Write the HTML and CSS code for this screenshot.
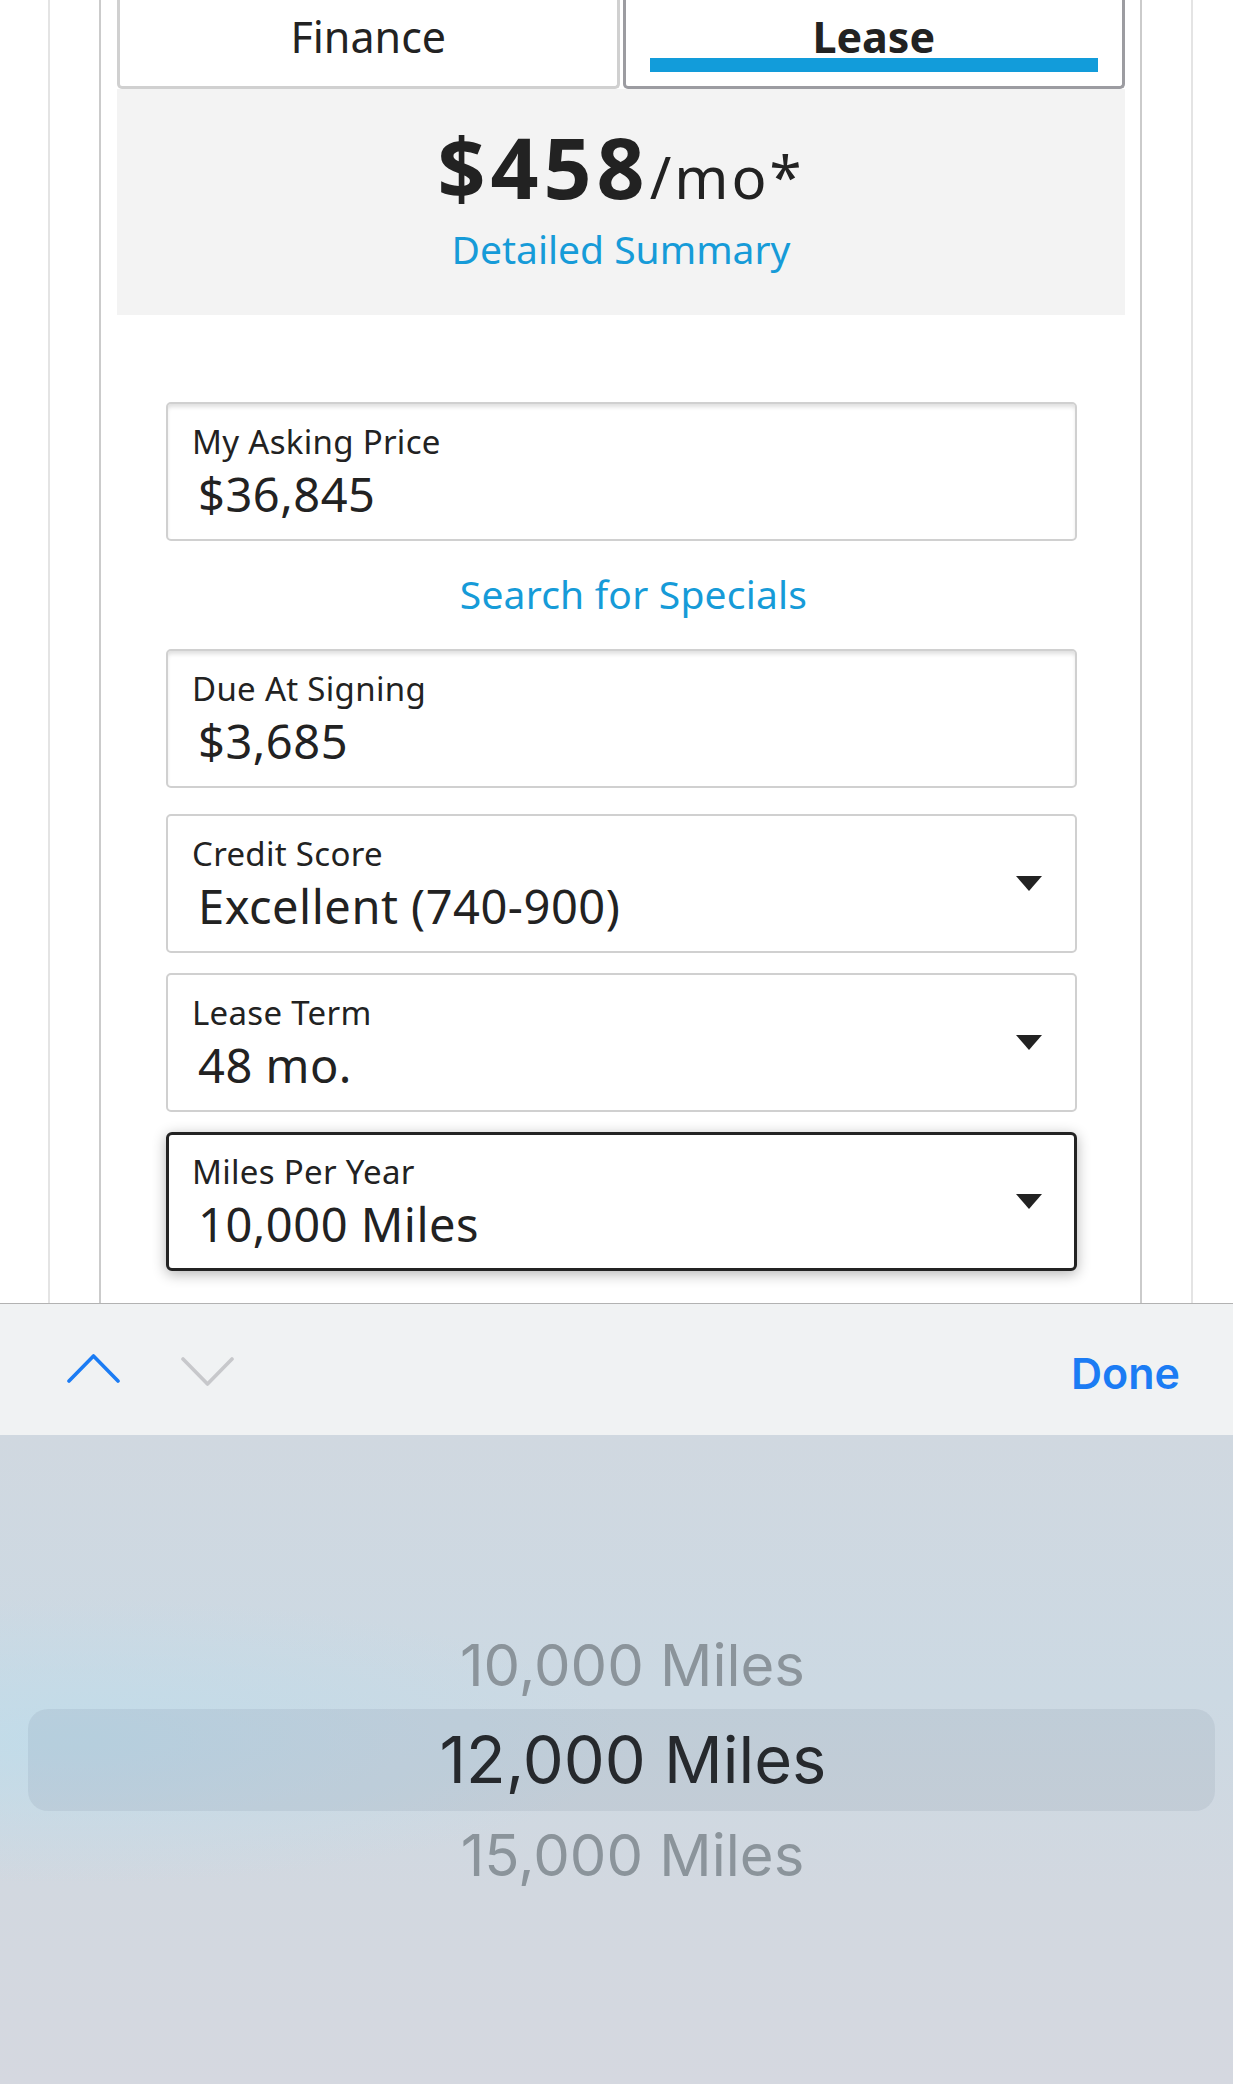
FILE: index.html
```html
<!DOCTYPE html>
<html lang="en">
<head>
  <meta charset="UTF-8" />
  <meta name="viewport" content="width=device-width, initial-scale=1.0"/>
  <title>Lease Calculator</title>
  <link rel="stylesheet" href="styles.css">
</head>
<body>

  <div class="page">
    <div class="frame">
      <div class="panel">

        <!-- Finance / Lease tabs -->
        <div class="tabs">
          <div class="tab">Finance</div>
          <div class="tab tab-active">Lease<span class="tab-bar"></span></div>
        </div>

        <!-- Monthly payment -->
        <div class="summary">
          <div class="price"><strong>$458</strong><span class="per">/mo*</span></div>
          <a class="summary-link">Detailed Summary</a>
        </div>

        <!-- Calculator fields -->
        <form class="calc">
          <div class="field field-input">
            <div class="field-label">My Asking Price</div>
            <div class="field-value">$36,845</div>
          </div>

          <a class="specials">Search for Specials</a>

          <div class="field field-input field-last">
            <div class="field-label">Due At Signing</div>
            <div class="field-value">$3,685</div>
          </div>

          <div class="field field-select">
            <div class="field-label">Credit Score</div>
            <div class="field-value">Excellent (740-900)</div>
          </div>

          <div class="field field-select">
            <div class="field-label">Lease Term</div>
            <div class="field-value">48 mo.</div>
          </div>

          <div class="field field-select field-focus">
            <div class="field-label">Miles Per Year</div>
            <div class="field-value">10,000 Miles</div>
          </div>
        </form>

      </div>
    </div>
  </div>

  <!-- Keyboard accessory bar -->
  <div class="key-bar">
    <svg class="chev" width="53" height="30" viewBox="0 0 53 30">
      <polyline points="2,28 26.5,3 51,28" fill="none" stroke="#1b7cf4" stroke-width="3.6" stroke-linecap="round" stroke-linejoin="round"/>
    </svg>
    <svg class="chev chev-down" width="53" height="30" viewBox="0 0 53 30">
      <polyline points="2,2 26.5,27 51,2" fill="none" stroke="#c7c8cb" stroke-width="3.6" stroke-linecap="round" stroke-linejoin="round"/>
    </svg>
    <a class="done">Done</a>
  </div>

  <!-- Picker wheel -->
  <div class="picker">
    <div class="pick-row">10,000 Miles</div>
    <div class="pick-row pick-selected">12,000 Miles</div>
    <div class="pick-row">15,000 Miles</div>
  </div>

</body>
</html>
```

FILE: styles.css
```css
body {
  margin: 0;
  padding: 0;
  background: #fff;
  font-family: "Noto Sans", "Open Sans", sans-serif;
  color: #222;
}

a {
  text-decoration: none;
}

.page {
  height: 1303px;
  overflow: hidden;
}

.frame {
  height: 100%;
  margin: 0 40px 0 48px;
  border-left: 2px solid #e4e4e4;
  border-right: 2px solid #e4e4e4;
}

.panel {
  height: 100%;
  margin: 0 49px;
  padding: 0 15px 0 16px;
  border-left: 2px solid #cbcbcb;
  border-right: 2px solid #cbcbcb;
}

/* Tabs */
.tabs {
  display: flex;
  gap: 3px;
}

.tab {
  flex: 1;
  height: 89px;
  box-sizing: border-box;
  padding-top: 15px;
  border: 3px solid #d0d0d0;
  border-top: 0;
  border-radius: 0 0 5px 5px;
  text-align: center;
  font-size: 43px;
  line-height: 43px;
  color: #222;
}

.tab-active {
  border-color: #9c9ca1;
  font-weight: 700;
}

.tab-bar {
  display: block;
  height: 14px;
  margin: 0 24px;
  background: #129cda;
}

/* Summary */
.summary {
  background: #f3f3f3;
  text-align: center;
  padding: 36px 0 42px;
}

.price {
  font-size: 84px;
  line-height: 84px;
  color: #222;
}

.price strong {
  font-weight: 700;
  letter-spacing: 5px;
}

.per {
  font-size: 58px;
  line-height: 1;
  letter-spacing: 3px;
}

.summary-link {
  display: block;
  margin-top: 16px;
  font-size: 39px;
  line-height: 48px;
  color: #169bd8;
}

/* Form fields */
.calc {
  margin: 0 48px 0 49px;
  padding-top: 87px;
}

.field {
  position: relative;
  height: 139px;
  box-sizing: border-box;
  margin-bottom: 20px;
  padding: 18px 24px 0;
  border: 2px solid #d0d0d0;
  border-radius: 5px;
  background: #fff;
}

.field-input {
  box-shadow: inset 0 4px 4px -1px rgba(0, 0, 0, 0.13);
}

.field-last {
  margin-bottom: 26px;
}

.field-label {
  font-size: 33px;
  line-height: 40px;
  letter-spacing: 0.3px;
  color: #222;
}

.field-value {
  margin-top: 6px;
  padding-left: 6px;
  font-size: 47px;
  line-height: 52px;
  letter-spacing: 0.5px;
  color: #222;
}

.field-select::after {
  content: "";
  position: absolute;
  right: 33px;
  top: 50%;
  margin-top: -8px;
  border-left: 13px solid transparent;
  border-right: 13px solid transparent;
  border-top: 15px solid #222;
}

.field-focus {
  padding: 17px 23px 0;
  border: 3px solid #232323;
  border-radius: 6px;
  box-shadow: 0 3px 14px rgba(0, 0, 0, 0.3);
}

.field-focus::after {
  right: 32px;
}

.specials {
  display: block;
  margin: 30px 0 32px;
  padding-left: 24px;
  text-align: center;
  font-size: 39px;
  line-height: 46px;
  letter-spacing: 0.2px;
  color: #169bd8;
}

/* Keyboard accessory */
.key-bar {
  display: flex;
  align-items: center;
  height: 131px;
  padding: 0 53px 0 67px;
  border-top: 1px solid #b2b2b2;
  background: #f0f2f3;
  font-family: Inter, "Noto Sans", sans-serif;
}

.chev {
  display: block;
  margin-top: -3px;
}

.chev-down {
  margin: 4px 0 0 61px;
}

.done {
  margin-left: auto;
  padding-top: 6px;
  font-size: 43px;
  font-weight: 600;
  color: #1b7cf4;
}

/* Picker */
.picker {
  height: 649px;
  display: flex;
  flex-direction: column;
  justify-content: center;
  background:
    radial-gradient(ellipse 45% 22% at 6% 47%, rgba(192, 220, 234, 0.9), rgba(192, 220, 234, 0)),
    linear-gradient(180deg, #d0d8e0 0%, #ccd9e3 40%, #d2d8e0 70%, #d5d8e0 100%);
  font-family: Inter, "Noto Sans", sans-serif;
}

.pick-row {
  height: 88px;
  padding-left: 32px;
  text-align: center;
  font-size: 58px;
  line-height: 88px;
  color: #8b949b;
}

.pick-selected {
  height: 102px;
  margin: 0 18px 0 28px;
  padding-left: 23px;
  border-radius: 20px;
  background: rgba(110, 125, 148, 0.13);
  font-size: 65px;
  line-height: 102px;
  color: #26292d;
}
```
